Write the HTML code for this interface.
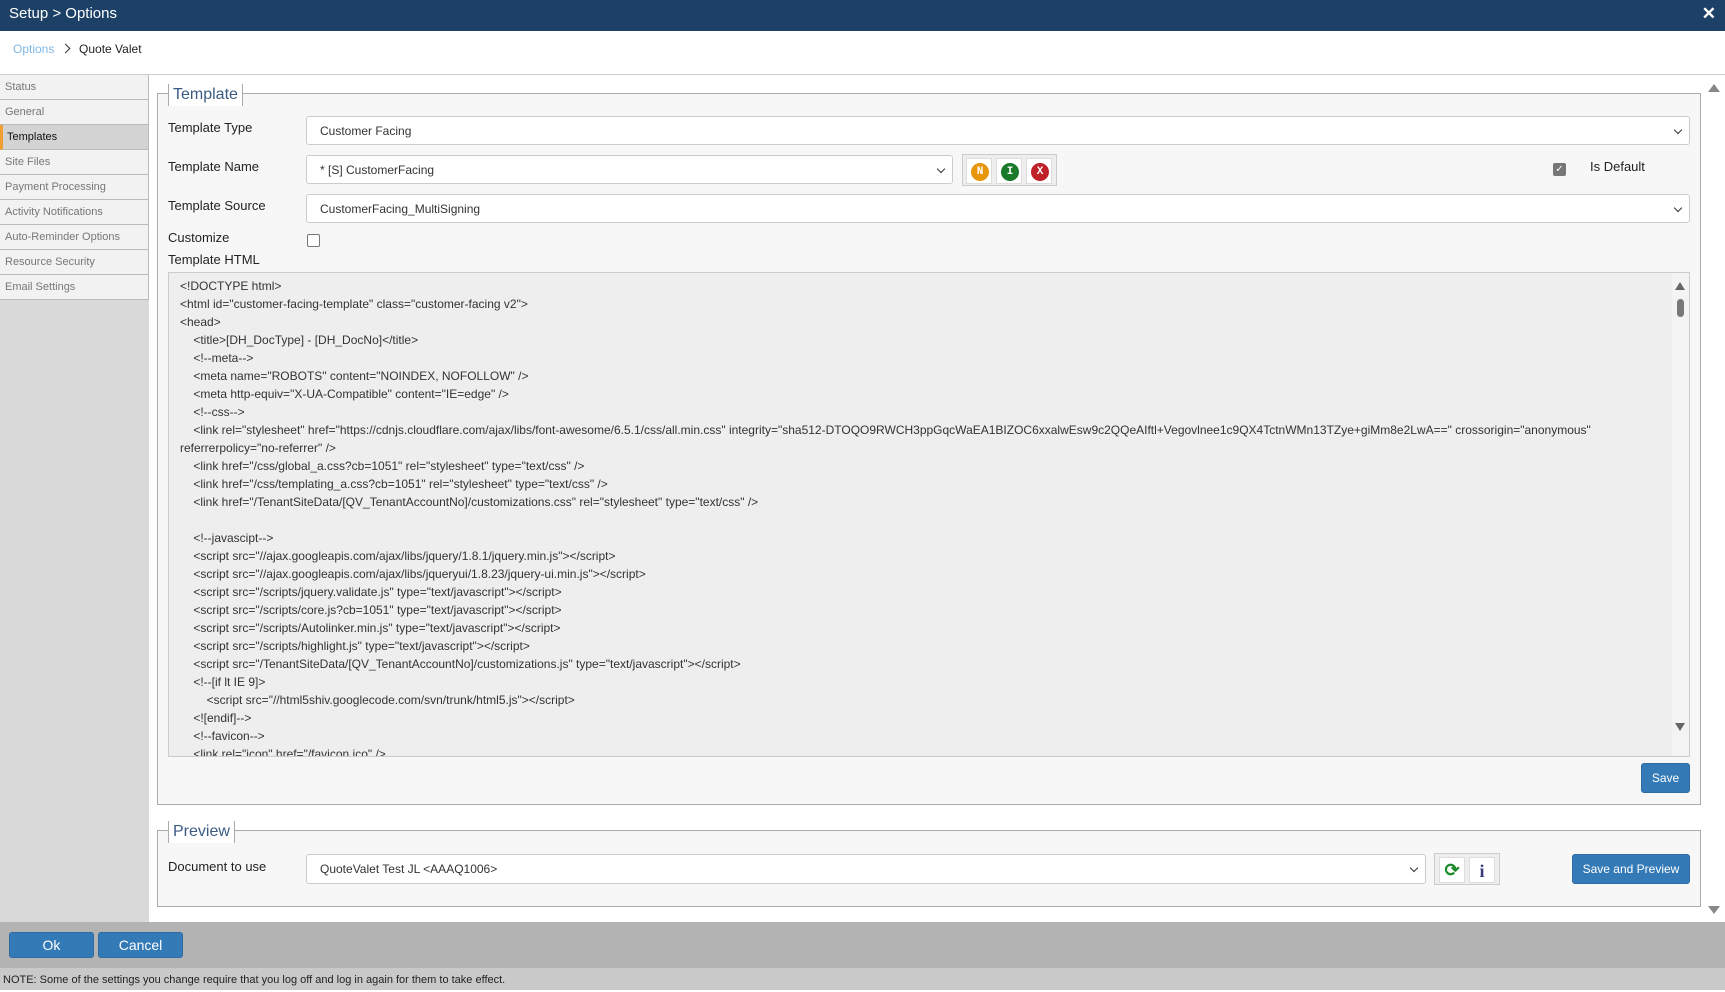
<!DOCTYPE html>
<html><head><style>
*{box-sizing:border-box;margin:0;padding:0}
body{width:1725px;height:990px;overflow:hidden;font-family:"Liberation Sans",Arial,sans-serif;background:#fff;position:relative;color:#222}
.abs{position:absolute}
.title{left:0;top:0;width:1725px;height:31px;background:#1d4166;color:#fff;font-size:15px;line-height:27px;padding-left:9px}
.close{right:9px;top:4px;color:#fff;font-size:17px;font-weight:bold}
.bc{top:42px;left:13px;font-size:12px}
.side{left:0;top:74px;width:149px;height:848px;background:#d9d9d9;border-top:1px solid #ccc}
.side div{height:25px;line-height:24px;font-size:11px;color:#777;padding-left:5px;background:#f2f2f2;border-bottom:1px solid #bbb;border-right:1px solid #bbb}
.side div.act{background:#d3d3d3;color:#111;border-left:3px solid #f0a030;padding-left:4px}
.main{left:149px;top:74px;width:1576px;height:848px;background:#fff;border-top:1px solid #ccc}
.fs{background:#f7f7f7;border:1px solid #aaa}
.leg{font-size:16px;color:#3b5b82;background:#fff;padding:0 4px;border-left:1px solid #aaa;border-right:1px solid #aaa;height:22px;line-height:22px}
.lbl{font-size:13px;color:#222;left:168px}
.sel{background:#fff;border:1px solid #ccc;border-radius:3px;font-size:12px;color:#333;padding-left:13px;line-height:28px}
.sel:after{content:"";position:absolute;right:8px;top:10px;width:5px;height:5px;border-right:1.6px solid #333;border-bottom:1.6px solid #333;transform:rotate(45deg)}
.ta{left:168px;top:272px;width:1522px;height:485px;background:#eee;border:1px solid #ccc;overflow:hidden}
.code{position:absolute;left:11px;top:4px;font-size:12px;line-height:18px;color:#333;white-space:pre}
.btn{background:#337ab7;color:#fff;border:1px solid #2e6da4;border-radius:3px;font-size:12px;text-align:center}
.ib{background:#fff;border:1px solid #ddd;position:absolute;top:3px;width:26px;height:26px}
.dot{position:absolute;left:4px;top:4px;width:18px;height:18px;border-radius:50%;color:#fff;font-size:11px;font-weight:bold;text-align:center;line-height:18px;font-family:"Liberation Mono",monospace}
</style></head><body>
<div class="abs title">Setup &gt; Options</div>
<div class="abs close">✕</div>
<div class="abs bc"><span style="color:#7fb8e6">Options</span> <span style="display:inline-block;width:7px;height:7px;border-right:1.5px solid #333;border-top:1.5px solid #333;transform:rotate(45deg);margin:0 7px 1px 4px"></span> Quote Valet</div>
<div class="abs side">
<div>Status</div><div>General</div><div class="act">Templates</div><div>Site Files</div><div>Payment Processing</div><div>Activity Notifications</div><div>Auto-Reminder Options</div><div>Resource Security</div><div>Email Settings</div>
</div>
<div class="abs main"></div>
<div class="abs fs" style="left:157px;top:93px;width:1544px;height:712px"></div>
<div class="abs leg" style="left:168px;top:84px">Template</div>
<div class="abs lbl" style="top:120px">Template Type</div>
<div class="abs sel" style="left:306px;top:116px;width:1384px;height:29px">Customer Facing</div>
<div class="abs lbl" style="top:159px">Template Name</div>
<div class="abs sel" style="left:306px;top:155px;width:647px;height:29px">* [S] CustomerFacing</div>
<div class="abs" style="left:962px;top:154px;width:95px;height:32px;border:1px solid #ccc;background:#eee">
<div class="ib" style="left:3px"><div class="dot" style="background:#e8960c">N</div></div>
<div class="ib" style="left:33px"><div class="dot" style="background:#1a7a2a">I</div></div>
<div class="ib" style="left:63px"><div class="dot" style="background:#c0202a">X</div></div>
</div>
<div class="abs" style="left:1553px;top:163px;width:13px;height:13px;background:#777;border-radius:2px;color:#fff;font-size:10px;line-height:13px;text-align:center">✓</div>
<div class="abs" style="left:1590px;top:159px;font-size:13px">Is Default</div>
<div class="abs lbl" style="top:198px">Template Source</div>
<div class="abs sel" style="left:306px;top:194px;width:1384px;height:29px">CustomerFacing_MultiSigning</div>
<div class="abs lbl" style="top:230px">Customize</div>
<div class="abs" style="left:307px;top:234px;width:13px;height:13px;border:1px solid #777;border-radius:2px;background:#fff"></div>
<div class="abs lbl" style="top:252px">Template HTML</div>
<div class="abs ta"><div class="code">&lt;!DOCTYPE html&gt;
&lt;html id="customer-facing-template" class="customer-facing v2"&gt;
&lt;head&gt;
    &lt;title&gt;[DH_DocType] - [DH_DocNo]&lt;/title&gt;
    &lt;!--meta--&gt;
    &lt;meta name="ROBOTS" content="NOINDEX, NOFOLLOW" /&gt;
    &lt;meta http-equiv="X-UA-Compatible" content="IE=edge" /&gt;
    &lt;!--css--&gt;
    &lt;link rel="stylesheet" href="https://cdnjs.cloudflare.com/ajax/libs/font-awesome/6.5.1/css/all.min.css" integrity="sha512-DTOQO9RWCH3ppGqcWaEA1BIZOC6xxalwEsw9c2QQeAIftl+Vegovlnee1c9QX4TctnWMn13TZye+giMm8e2LwA==" crossorigin="anonymous"
referrerpolicy="no-referrer" /&gt;
    &lt;link href="/css/global_a.css?cb=1051" rel="stylesheet" type="text/css" /&gt;
    &lt;link href="/css/templating_a.css?cb=1051" rel="stylesheet" type="text/css" /&gt;
    &lt;link href="/TenantSiteData/[QV_TenantAccountNo]/customizations.css" rel="stylesheet" type="text/css" /&gt;

    &lt;!--javascipt--&gt;
    &lt;script src="//ajax.googleapis.com/ajax/libs/jquery/1.8.1/jquery.min.js"&gt;&lt;/script&gt;
    &lt;script src="//ajax.googleapis.com/ajax/libs/jqueryui/1.8.23/jquery-ui.min.js"&gt;&lt;/script&gt;
    &lt;script src="/scripts/jquery.validate.js" type="text/javascript"&gt;&lt;/script&gt;
    &lt;script src="/scripts/core.js?cb=1051" type="text/javascript"&gt;&lt;/script&gt;
    &lt;script src="/scripts/Autolinker.min.js" type="text/javascript"&gt;&lt;/script&gt;
    &lt;script src="/scripts/highlight.js" type="text/javascript"&gt;&lt;/script&gt;
    &lt;script src="/TenantSiteData/[QV_TenantAccountNo]/customizations.js" type="text/javascript"&gt;&lt;/script&gt;
    &lt;!--[if lt IE 9]&gt;
        &lt;script src="//html5shiv.googlecode.com/svn/trunk/html5.js"&gt;&lt;/script&gt;
    &lt;![endif]--&gt;
    &lt;!--favicon--&gt;
    &lt;link rel="icon" href="/favicon.ico" /&gt;</div>
<div style="position:absolute;right:0;top:0;width:17px;height:485px;background:#f3f3f3"></div>
<div style="position:absolute;right:4px;top:9px;border-left:5px solid transparent;border-right:5px solid transparent;border-bottom:8px solid #666"></div>
<div style="position:absolute;right:5px;top:26px;width:7px;height:18px;border-radius:4px;background:#777"></div>
<div style="position:absolute;right:4px;top:450px;border-left:5px solid transparent;border-right:5px solid transparent;border-top:8px solid #666"></div>
</div>
<div class="abs btn" style="left:1641px;top:763px;width:49px;height:30px;line-height:28px">Save</div>
<div class="abs fs" style="left:157px;top:830px;width:1544px;height:77px"></div>
<div class="abs leg" style="left:168px;top:821px">Preview</div>
<div class="abs lbl" style="top:859px">Document to use</div>
<div class="abs sel" style="left:306px;top:854px;width:1120px;height:30px">QuoteValet Test JL &lt;AAAQ1006&gt;</div>
<div class="abs" style="left:1434px;top:853px;width:66px;height:32px;border:1px solid #ccc;background:#eee">
<div class="ib" style="left:4px;color:#1a8a2a;font-size:18px;text-align:center;line-height:24px;font-weight:bold">⟳</div>
<div class="ib" style="left:34px;color:#3b3b7a;font-size:18px;text-align:center;line-height:26px;font-family:'Liberation Serif',serif;font-weight:bold">i</div>
</div>
<div class="abs btn" style="left:1572px;top:854px;width:118px;height:30px;line-height:28px">Save and Preview</div>
<div class="abs" style="left:1708px;top:84px;border-left:6px solid transparent;border-right:6px solid transparent;border-bottom:8px solid #888"></div>
<div class="abs" style="left:1708px;top:906px;border-left:6px solid transparent;border-right:6px solid transparent;border-top:8px solid #888"></div>
<div class="abs" style="left:0;top:922px;width:1725px;height:46px;background:#b3b3b3"></div>
<div class="abs btn" style="left:9px;top:932px;width:85px;height:26px;line-height:24px;font-size:14px">Ok</div>
<div class="abs btn" style="left:98px;top:932px;width:85px;height:26px;line-height:24px;font-size:14px">Cancel</div>
<div class="abs" style="left:0;top:968px;width:1725px;height:22px;background:#c9c9c9;font-size:11px;line-height:24px;padding-left:3px;color:#222">NOTE: Some of the settings you change require that you log off and log in again for them to take effect.</div>
</body></html>
